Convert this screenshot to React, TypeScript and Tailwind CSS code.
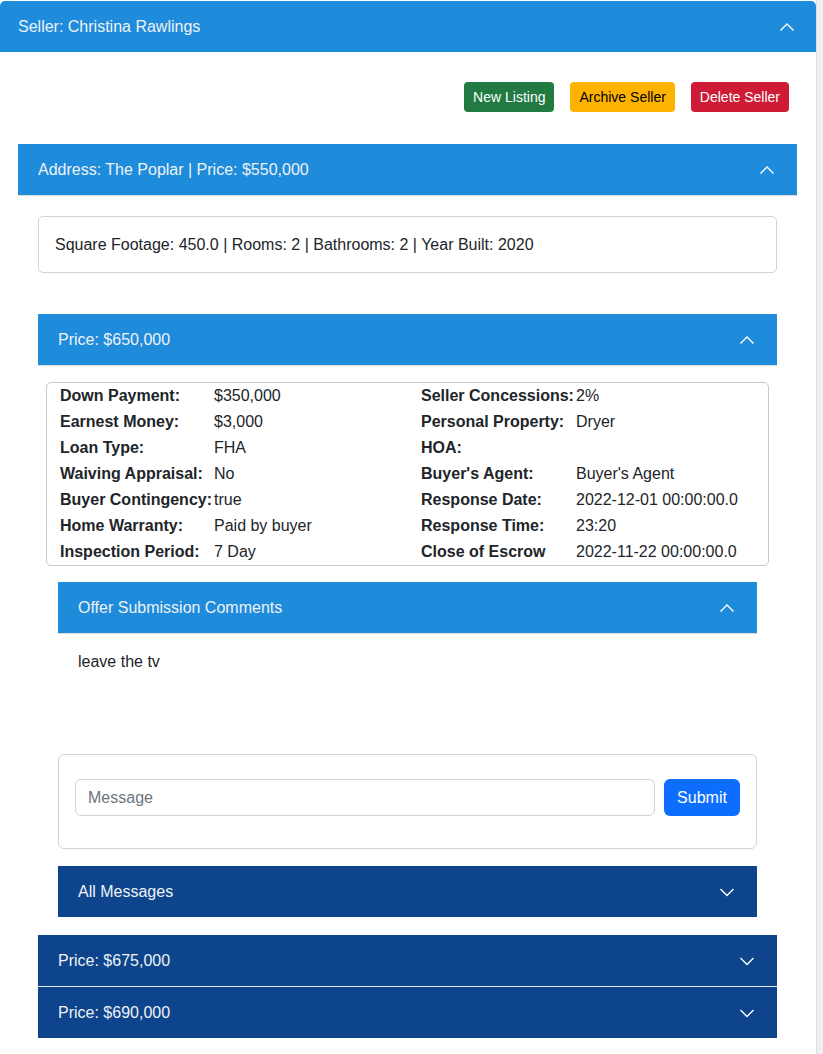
import React from 'react';

const font = { fontFamily: '"Liberation Sans", Arial, sans-serif' };

function Chevron({ up }: { up: boolean }) {
  return (
    <svg width="16" height="16" viewBox="0 0 16 16" fill="none" className="shrink-0">
      {up ? (
        <polyline points="1.5,11.5 8,5 14.5,11.5" stroke="white" strokeWidth="1.4" />
      ) : (
        <polyline points="1.5,5 8,11.5 14.5,5" stroke="white" strokeWidth="1.4" />
      )}
    </svg>
  );
}

// open headers carry a thin light line under them, closed ones don't
function Header({ title, open, dark }: { title: string; open?: boolean; dark?: boolean }) {
  return (
    <div
      className={
        'flex items-center justify-between pl-5 pr-[22px] text-base text-[#eef2f6] ' +
        (dark ? 'h-[51px] bg-[#0d448c]' : 'h-[52px] border-b border-[#dcdcdc] bg-[#1e8bdb]')
      }
    >
      <span>{title}</span>
      <Chevron up={!!open} />
    </div>
  );
}

const left = [
  ['Down Payment:', '$350,000'],
  ['Earnest Money:', '$3,000'],
  ['Loan Type:', 'FHA'],
  ['Waiving Appraisal:', 'No'],
  ['Buyer Contingency:', 'true'],
  ['Home Warranty:', 'Paid by buyer'],
  ['Inspection Period:', '7 Day'],
];

const right = [
  ['Seller Concessions:', '2%'],
  ['Personal Property:', 'Dryer'],
  ['HOA:', ''],
  ["Buyer's Agent:", "Buyer's Agent"],
  ['Response Date:', '2022-12-01 00:00:00.0'],
  ['Response Time:', '23:20'],
  ['Close of Escrow', '2022-11-22 00:00:00.0'],
];

export default function App() {
  return (
    <div className="flex min-h-[1054px] bg-white text-[#212529]" style={font}>
      <div className="w-[817px] shrink-0 border-r border-[#dedede] pt-px">
        {/* Seller */}
        <div className="flex h-[51px] items-center justify-between rounded-t-[5px] bg-[#1e8bdb] pl-[18px] pr-[21px] text-base text-[#eef2f6]">
          <span>Seller: Christina Rawlings</span>
          <Chevron up />
        </div>

        <div className="pl-[18px] pr-[19px] pt-[30px]">
          <div className="flex justify-end gap-4 pr-[8px]">
            <button className="h-[30px] rounded-[4px] bg-[#217a42] px-[9px] text-sm text-white">New Listing</button>
            <button className="h-[30px] rounded-[4px] bg-[#fdb300] px-[9px] text-sm text-black">Archive Seller</button>
            <button className="h-[30px] rounded-[4px] bg-[#ce1b36] px-[9px] text-sm text-white">Delete Seller</button>
          </div>

          {/* Address */}
          <div className="mt-8">
            <Header title="Address: The Poplar | Price: $550,000" open />

            <div className="px-5 pt-5">
              <div className="flex h-[57px] items-center rounded-[5px] border border-[#d4d4d4] px-4 text-base">
                Square Footage: 450.0 | Rooms: 2 | Bathrooms: 2 | Year Built: 2020
              </div>

              {/* Price 650 */}
              <div className="mt-[41px]">
                <Header title="Price: $650,000" open />
                <div className="pt-4">
                  <div className="mx-2 rounded-[5px] border border-[#c8c8c8] pl-[13px]">
                    <div className="grid grid-cols-[154px_207px_155px_1fr] text-base">
                      {left.map((row, i) => (
                        <React.Fragment key={i}>
                          <div className="flex h-[26px] items-center font-bold">{row[0]}</div>
                          <div className="flex h-[26px] items-center">{row[1]}</div>
                          <div className="flex h-[26px] items-center font-bold">{right[i][0]}</div>
                          <div className="flex h-[26px] items-center">{right[i][1]}</div>
                        </React.Fragment>
                      ))}
                    </div>
                  </div>

                  <div className="px-5 pt-4">
                    <Header title="Offer Submission Comments" open />
                    <div className="px-5 pb-[80px] pt-4 text-base leading-6">leave the tv</div>

                    <div className="rounded-[6px] border border-[#d4d4d4] px-4 pb-[32px] pt-6">
                      <div className="flex gap-[9px]">
                        <input
                          placeholder="Message"
                          className="h-[37px] flex-1 rounded-[6px] border border-[#ced4da] px-3 text-base placeholder:text-[#6c757d] outline-none"
                        />
                        <button className="h-[37px] w-[76px] rounded-[6px] bg-[#0d6efd] text-base text-white">Submit</button>
                      </div>
                    </div>

                    <div className="mt-[17px]">
                      <Header title="All Messages" dark />
                    </div>
                  </div>
                </div>
              </div>

              <div className="mt-[18px] border-b border-[#e6ecf4]">
                <Header title="Price: $675,000" dark />
              </div>
              <Header title="Price: $690,000" dark />
            </div>
          </div>
        </div>
      </div>
      <div className="flex-1 bg-[#efefef]" />
    </div>
  );
}
